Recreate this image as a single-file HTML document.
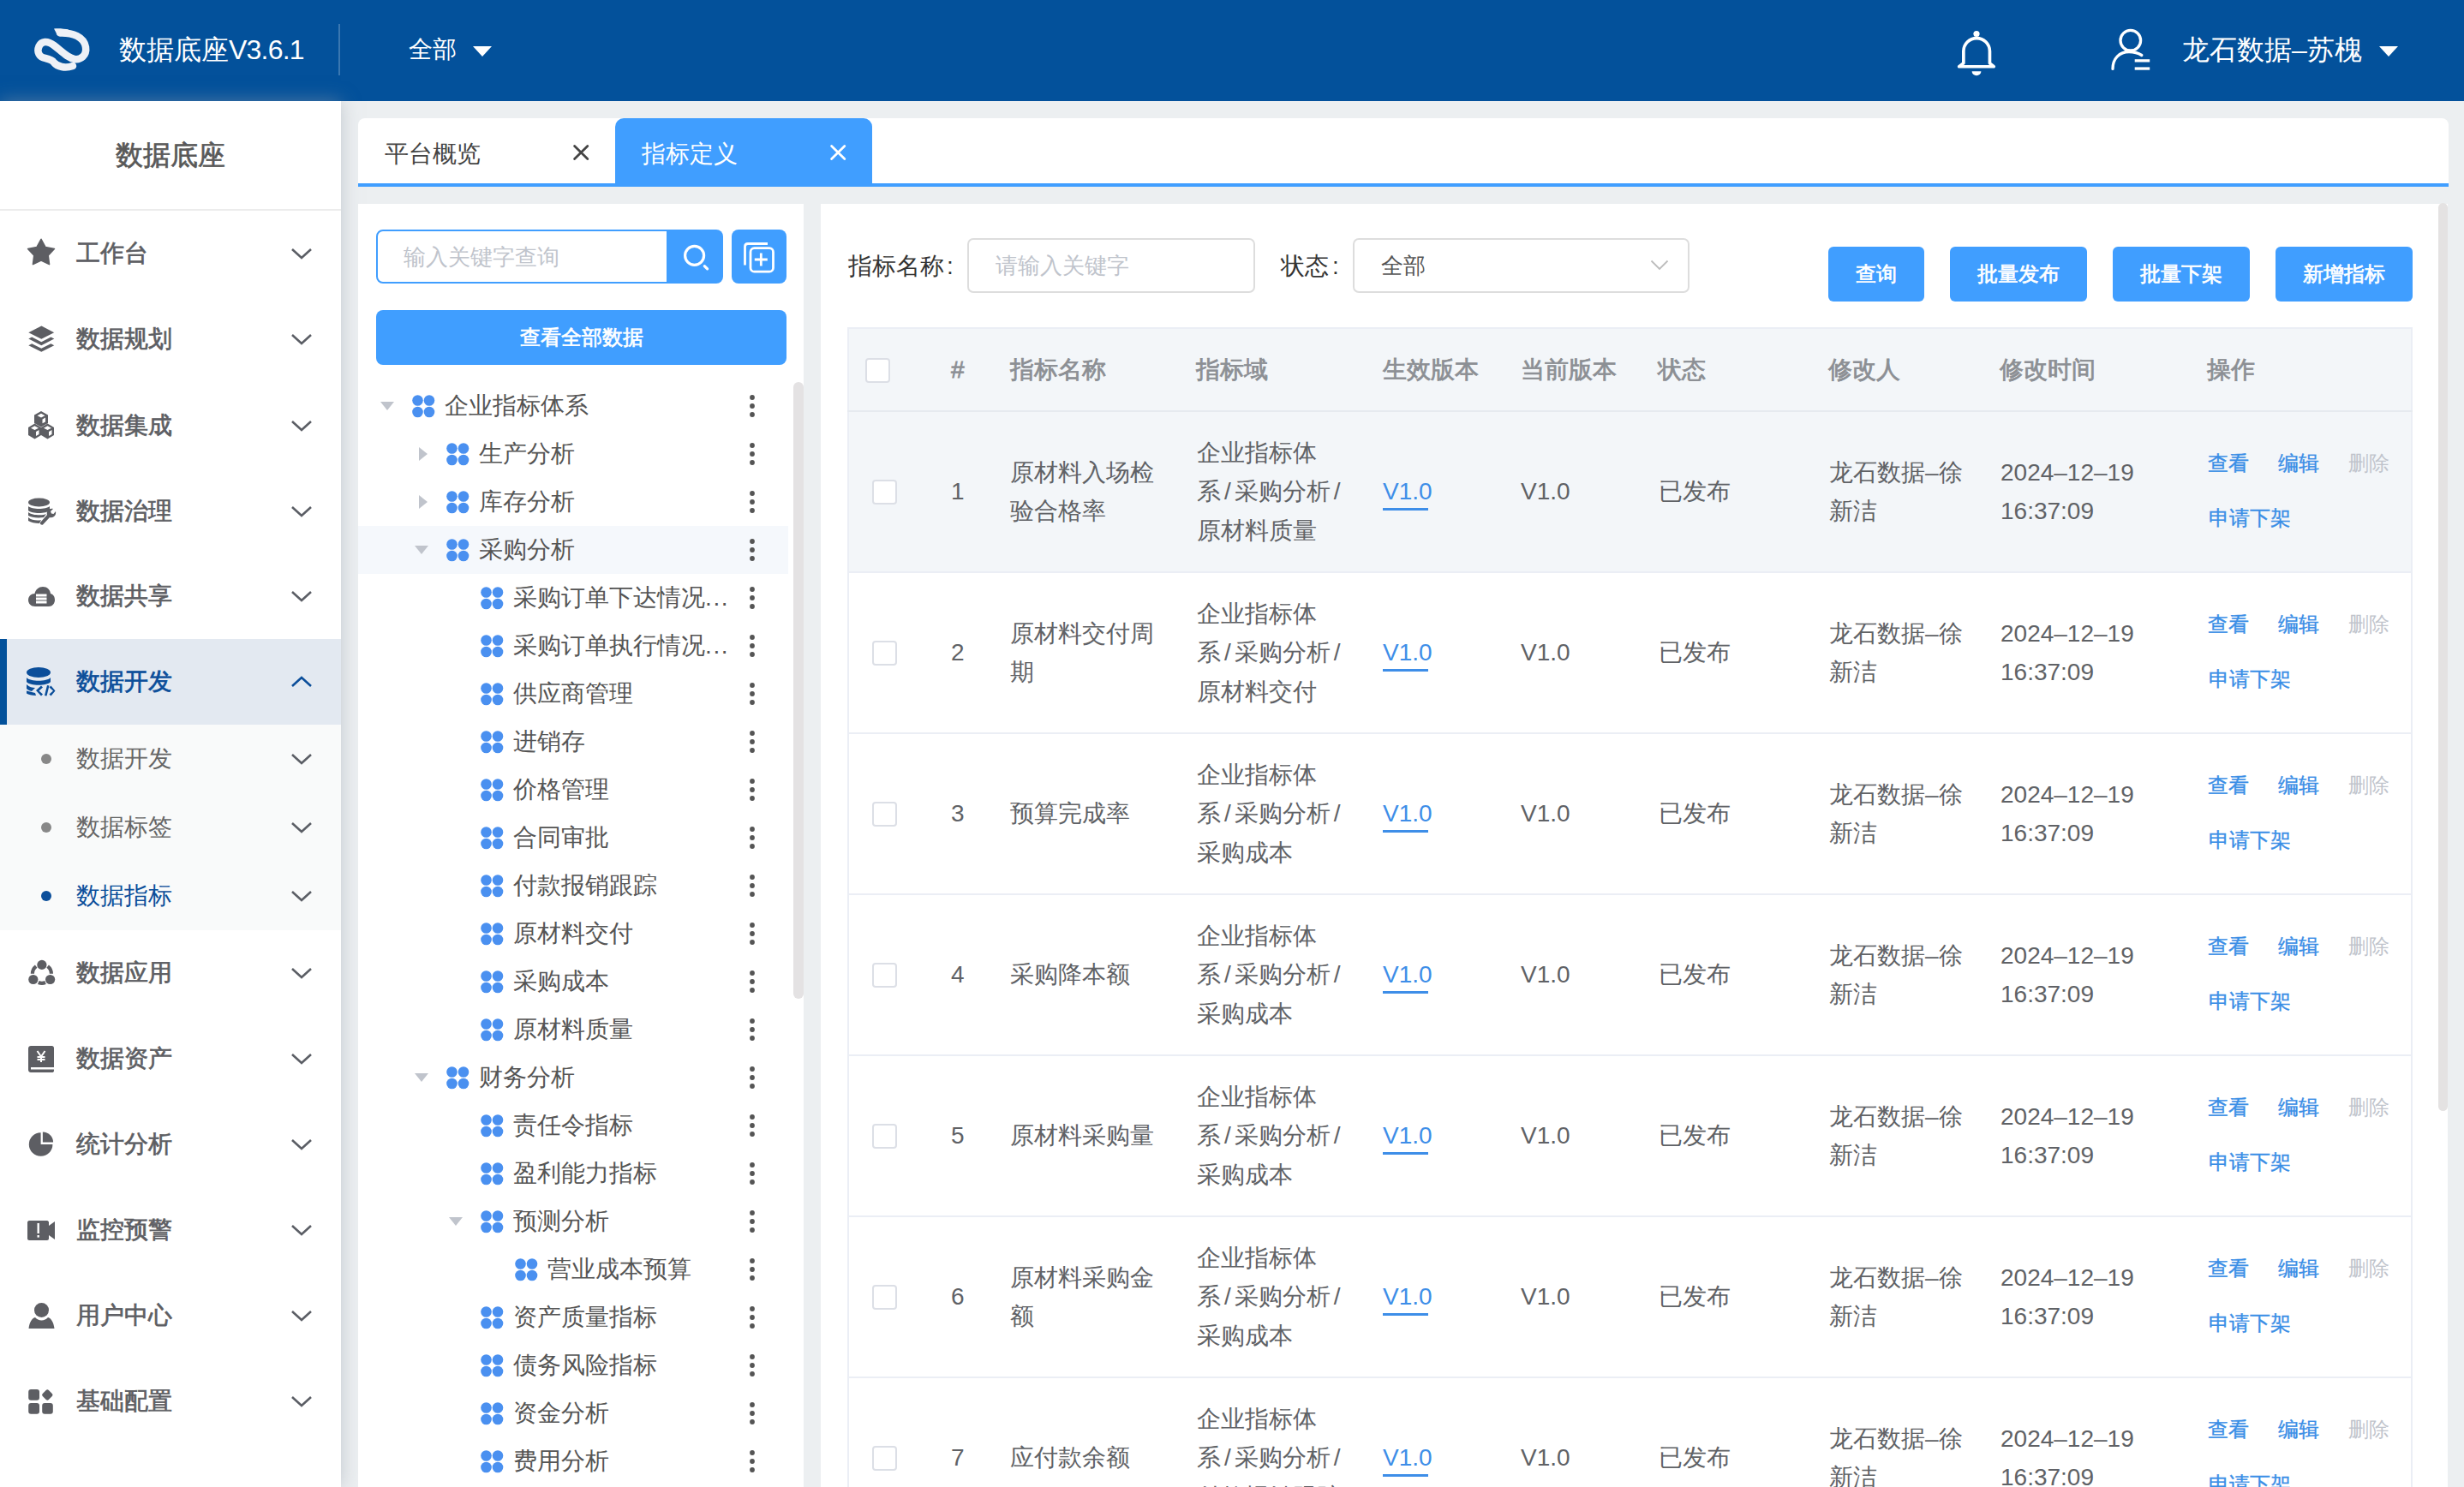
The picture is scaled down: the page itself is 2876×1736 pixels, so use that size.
<!DOCTYPE html>
<html><head><meta charset="utf-8"><title>数据底座</title>
<style>
*{box-sizing:border-box;margin:0;padding:0}
html,body{width:2876px;height:1736px;overflow:hidden;background:#eceff1;font-family:"Liberation Sans", sans-serif;}
.abs{position:absolute}
.t{position:absolute;white-space:nowrap}
svg{position:absolute;overflow:visible}
</style></head>
<body>
<div class="abs" style="left:0;top:0;width:2876px;height:118px;background:#03519b;"></div>
<svg style="left:0;top:0" width="120" height="118"><path d="M70 38.5 C85 38 98 43 100 55 C101.5 65 94 70 87 69 C79 68 71 59 63 53 C55 47 48.5 48 45.5 54 C42.5 61 46 67 53 68 C58 69 61 70 63 73 C67 78 76 80 85 77" fill="none" stroke="#eef1f6" stroke-width="8.5" stroke-linecap="round"/><path d="M63 33.5 C70 33 76 34 80 34.5 L78 43 C74 42 70 41.5 67 41 Z" fill="#eef1f6"/></svg>
<div class="t" style="left:139px;top:28.0px;font-size:32px;line-height:60px;color:#fff;font-weight:400;">数据底座<span style="letter-spacing:-0.8px">V3.6.1</span></div>
<div class="abs" style="left:395px;top:28px;width:2px;height:60px;background:rgba(255,255,255,0.22)"></div>
<div class="t" style="left:477px;top:28.0px;font-size:28px;line-height:60px;color:#fff;font-weight:400;">全部</div>
<svg style="left:552px;top:54px" width="22" height="12"><path d="M0 0 L22 0 L11 12 Z" fill="#fff"/></svg>
<svg style="left:2280px;top:30px" width="56" height="64"><path d="M11.85 43.8 L11.85 29.85 A15.3 15.3 0 0 1 42.45 29.85 L42.45 43.8 L47.15 47.75 L6.65 47.75 Z" fill="none" stroke="#fff" stroke-width="3.7" stroke-linejoin="round"/><circle cx="27" cy="9.5" r="3.6" fill="#fff"/><path d="M21.6 53.3 L32.4 53.3 A5.4 5 0 0 1 21.6 53.3 Z" fill="#fff"/></svg>
<svg style="left:2460px;top:32px" width="54" height="54"><circle cx="26.8" cy="15.2" r="11.8" fill="none" stroke="#fff" stroke-width="3.3"/><path d="M6 48.4 C6 36 14 28.5 25 28.5 C31 28.5 36 30 39.8 32.5" fill="none" stroke="#fff" stroke-width="3.3" stroke-linecap="round"/><rect x="31.7" y="37.2" width="17.5" height="3.3" fill="#fff"/><rect x="31.7" y="46.4" width="17.5" height="3.3" fill="#fff"/></svg>
<div class="t" style="left:2547px;top:28.0px;font-size:32px;line-height:60px;color:#fff;font-weight:400;">龙石数据–苏槐</div>
<svg style="left:2777px;top:54px" width="22" height="12"><path d="M0 0 L22 0 L11 12 Z" fill="#fff"/></svg>
<div class="abs" style="left:0;top:118px;width:398px;height:1618px;background:#fff;box-shadow:0 0 20px rgba(150,160,172,0.5)"></div>
<div class="t" style="left:0px;top:151.0px;font-size:32px;line-height:60px;color:#595959;font-weight:400;width:398px;text-align:center;-webkit-text-stroke:0.7px #595959;">数据底座</div>
<div class="abs" style="left:0;top:244px;width:398px;height:2px;background:#ececec"></div>
<svg style="left:25px;top:270px" width="50" height="50"><g transform="translate(0 0)"><path d="M23.00 9.30 L28.05 18.54 L38.41 20.49 L31.18 28.16 L32.52 38.61 L23.00 34.10 L13.48 38.61 L14.82 28.16 L7.59 20.49 L17.95 18.54 Z" fill="#5d5e63" stroke="#5d5e63" stroke-width="1.6" stroke-linejoin="round"/></g></svg>
<div class="t" style="left:89px;top:268.0px;font-size:28px;line-height:56px;color:#5d5e63;font-weight:400;-webkit-text-stroke:0.7px #5d5e63;">工作台</div>
<svg style="left:340px;top:290px" width="24" height="12"><path d="M1 1 L12 11 L23 1" fill="none" stroke="#5b5e65" stroke-width="2.6" stroke-linejoin="miter"/></svg>
<svg style="left:25px;top:370px" width="50" height="50"><g transform="translate(0 0)"><g fill="#5d5e63"><path d="M23.4 10.6 L38.2 18.2 L23.3 25.8 L8.3 18.2 Z"/><path d="M8.3 25.6 L12.2 23.6 L23.3 29.2 L34.4 23.6 L38.3 25.6 L23.3 33.2 Z"/><path d="M8.3 33.2 L12.2 31.2 L23.3 36.8 L34.4 31.2 L38.3 33.2 L23.3 40.8 Z"/></g></g></svg>
<div class="t" style="left:89px;top:368.0px;font-size:28px;line-height:56px;color:#5d5e63;font-weight:400;-webkit-text-stroke:0.7px #5d5e63;">数据规划</div>
<svg style="left:340px;top:390px" width="24" height="12"><path d="M1 1 L12 11 L23 1" fill="none" stroke="#5b5e65" stroke-width="2.6" stroke-linejoin="miter"/></svg>
<svg style="left:25px;top:470px" width="50" height="50"><g transform="translate(8 10)"><g fill="#5d5e63"><path d="M15 0 L23 4.5 L23 14 L15 18.5 L7 14 L7 4.5 Z"/><path d="M7.5 14.5 L15 19 L15 28 L7.5 32.5 L0 28 L0 19 Z"/><path d="M22.5 14.5 L30 19 L30 28 L22.5 32.5 L15 28 L15 19 Z"/></g><g fill="#fff"><path d="M15 2.8 L19.5 5.2 L15 7.6 L10.5 5.2 Z"/><path d="M16.5 9.5 L20 7.6 L20 12.5 L16.5 14.3 Z"/><path d="M7.5 17.3 L12 19.7 L7.5 22 L3 19.7 Z"/><path d="M9 24 L12.5 22 L12.5 27 L9 29 Z"/><path d="M22.5 17.3 L27 19.7 L22.5 22 L18 19.7 Z"/><path d="M24 24 L27.5 22 L27.5 27 L24 29 Z"/></g></g></svg>
<div class="t" style="left:89px;top:469.0px;font-size:28px;line-height:56px;color:#5d5e63;font-weight:400;-webkit-text-stroke:0.7px #5d5e63;">数据集成</div>
<svg style="left:340px;top:491px" width="24" height="12"><path d="M1 1 L12 11 L23 1" fill="none" stroke="#5b5e65" stroke-width="2.6" stroke-linejoin="miter"/></svg>
<svg style="left:25px;top:570px" width="50" height="50"><g transform="translate(8 11)"><g fill="#5d5e63"><ellipse cx="12.5" cy="5.5" rx="12.5" ry="5"/><path d="M0 10 C4 14 21 14 25 10 L25 15 C21 19 4 19 0 15 Z"/><path d="M0 17 C4 21 18 21 21 19 L18 23 C10 24 4 23 0 21 Z"/><path d="M0 23 C4 27 12 27 15 26 L13 30 C8 30 3 29 0 27 Z"/><path d="M14 29 L22 20 C21 16 24 12 29 13 L26 16 L27 18.5 L29.5 19 L32 16 C33 21 29 24 25 23 L17 31.5 C16 32.5 13 31 14 29 Z"/></g></g></svg>
<div class="t" style="left:89px;top:569.0px;font-size:28px;line-height:56px;color:#5d5e63;font-weight:400;-webkit-text-stroke:0.7px #5d5e63;">数据治理</div>
<svg style="left:340px;top:591px" width="24" height="12"><path d="M1 1 L12 11 L23 1" fill="none" stroke="#5b5e65" stroke-width="2.6" stroke-linejoin="miter"/></svg>
<svg style="left:25px;top:670px" width="50" height="50"><g transform="translate(8 15)"><path d="M8 23 C3 23 0 19.5 0 15.5 C0 11 3.5 8 7.5 8 C8.5 3 12.5 0 17 0 C22 0 25.5 3.5 26 8 C29.5 9 31 12 31 15.5 C31 19.5 28 23 24 23 Z" fill="#5d5e63"/><g fill="#fff"><rect x="9" y="8.5" width="12.5" height="3"/><rect x="9" y="12.5" width="12.5" height="3"/><rect x="9" y="16.5" width="12.5" height="3"/></g></g></svg>
<div class="t" style="left:89px;top:668.0px;font-size:28px;line-height:56px;color:#5d5e63;font-weight:400;-webkit-text-stroke:0.7px #5d5e63;">数据共享</div>
<svg style="left:340px;top:690px" width="24" height="12"><path d="M1 1 L12 11 L23 1" fill="none" stroke="#5b5e65" stroke-width="2.6" stroke-linejoin="miter"/></svg>
<div class="abs" style="left:0;top:746px;width:398px;height:100px;background:#e3e9f1"></div>
<div class="abs" style="left:0;top:746px;width:8px;height:100px;background:#03519b"></div>
<svg style="left:31px;top:779px" width="36" height="36"><g fill="#0b4e9a"><ellipse cx="14" cy="6" rx="14" ry="6"/><path d="M0 12 C4 17 24 17 28 12 L28 17 C24 22 4 22 0 17 Z"/><path d="M0 20 C3 23 7 24 10 24 L6 28 C4 27.5 1.5 26.5 0 25 Z"/><path d="M0 27.5 L10 30 L11 33 C6 33 2 32 0 30.5 Z"/><path d="M11 27 L17 21.5 L19 23.5 L14.5 27.5 L19 31.5 L17 33.5 Z"/><path d="M21 33 L24 21 L26.5 21.5 L23.5 33.5 Z"/><path d="M26.5 23.5 L28.5 21.5 L33.5 27.5 L28.5 33.5 L26.5 31.5 L31 27.5 Z"/></g></svg>
<div class="t" style="left:89px;top:768.0px;font-size:28px;line-height:56px;color:#0b4e9a;font-weight:400;-webkit-text-stroke:0.7px #0b4e9a;">数据开发</div>
<svg style="left:340px;top:790px" width="24" height="12"><path d="M1 11 L12 1 L23 11" fill="none" stroke="#0b4e9a" stroke-width="2.6" stroke-linejoin="miter"/></svg>
<div class="abs" style="left:0;top:846px;width:398px;height:240px;background:#f9fafa"></div>
<div class="abs" style="left:48px;top:880px;width:12px;height:12px;border-radius:6px;background:#888"></div>
<div class="t" style="left:89px;top:858.0px;font-size:28px;line-height:56px;color:#666;font-weight:400;">数据开发</div>
<svg style="left:340px;top:880px" width="24" height="12"><path d="M1 1 L12 11 L23 1" fill="none" stroke="#5b5e65" stroke-width="2.6" stroke-linejoin="miter"/></svg>
<div class="abs" style="left:48px;top:960px;width:12px;height:12px;border-radius:6px;background:#888"></div>
<div class="t" style="left:89px;top:938.0px;font-size:28px;line-height:56px;color:#666;font-weight:400;">数据标签</div>
<svg style="left:340px;top:960px" width="24" height="12"><path d="M1 1 L12 11 L23 1" fill="none" stroke="#5b5e65" stroke-width="2.6" stroke-linejoin="miter"/></svg>
<div class="abs" style="left:48px;top:1040px;width:12px;height:12px;border-radius:6px;background:#0b4e9a"></div>
<div class="t" style="left:89px;top:1018.0px;font-size:28px;line-height:56px;color:#0b4e9a;font-weight:400;">数据指标</div>
<svg style="left:340px;top:1040px" width="24" height="12"><path d="M1 1 L12 11 L23 1" fill="none" stroke="#5b5e65" stroke-width="2.6" stroke-linejoin="miter"/></svg>
<svg style="left:25px;top:1110px" width="50" height="50"><g transform="translate(0 0)"><g fill="#5d5e63"><circle cx="23.9" cy="16.4" r="5.6"/><circle cx="13.8" cy="33.5" r="5.6"/><circle cx="33.6" cy="33.5" r="5.6"/></g><g fill="none" stroke="#5d5e63" stroke-width="4.2"><path d="M12.9 26.8 A11 11 0 0 1 17.13 18.13"/><path d="M30.67 18.13 A11 11 0 0 1 34.9 26.8"/><path d="M28.02 37 A11 11 0 0 1 19.78 37"/></g></g></svg>
<div class="t" style="left:89px;top:1108.0px;font-size:28px;line-height:56px;color:#5d5e63;font-weight:400;-webkit-text-stroke:0.7px #5d5e63;">数据应用</div>
<svg style="left:340px;top:1130px" width="24" height="12"><path d="M1 1 L12 11 L23 1" fill="none" stroke="#5b5e65" stroke-width="2.6" stroke-linejoin="miter"/></svg>
<svg style="left:25px;top:1210px" width="50" height="50"><g transform="translate(8 11)"><path d="M3 0 L27.5 0 C29 0 30 1 30 2.5 L30 25 L3 25 L3 27.5 L30 27.5 L30 29 C30 30.5 29 31 27.5 31 L3 31 C1.5 31 0 30 0 28 L0 3 C0 1 1.5 0 3 0 Z" fill="#5d5e63"/><g stroke="#fff" stroke-width="2" fill="none"><path d="M10.5 6 L15 12.5 L19.5 6 M15 12.5 L15 19 M10.5 13 L19.5 13 M10.5 16 L19.5 16"/></g></g></svg>
<div class="t" style="left:89px;top:1208.0px;font-size:28px;line-height:56px;color:#5d5e63;font-weight:400;-webkit-text-stroke:0.7px #5d5e63;">数据资产</div>
<svg style="left:340px;top:1230px" width="24" height="12"><path d="M1 1 L12 11 L23 1" fill="none" stroke="#5b5e65" stroke-width="2.6" stroke-linejoin="miter"/></svg>
<svg style="left:25px;top:1310px" width="50" height="50"><g transform="translate(0 0)"><path d="M22.6 12.2 L22.6 25.9 L36.4 25.9 A13.8 13.8 0 1 1 22.6 12.2 Z" fill="#5d5e63"/><path d="M24.9 11.6 A12.2 12.2 0 0 1 37.1 23.6 L24.9 23.6 Z" fill="#5d5e63"/></g></svg>
<div class="t" style="left:89px;top:1308.0px;font-size:28px;line-height:56px;color:#5d5e63;font-weight:400;-webkit-text-stroke:0.7px #5d5e63;">统计分析</div>
<svg style="left:340px;top:1330px" width="24" height="12"><path d="M1 1 L12 11 L23 1" fill="none" stroke="#5b5e65" stroke-width="2.6" stroke-linejoin="miter"/></svg>
<svg style="left:25px;top:1410px" width="50" height="50"><g transform="translate(7 15)"><path d="M2 0 L23 0 C24 0 25 1 25 2 L25 6 L32 1 L32 22 L25 17 L25 21 C25 22 24 23 23 23 L2 23 C1 23 0 22 0 21 L0 2 C0 1 1 0 2 0 Z" fill="#5d5e63"/><rect x="11.5" y="3" width="2.4" height="12" fill="#fff"/><rect x="11.5" y="17" width="2.4" height="2.6" fill="#fff"/></g></svg>
<div class="t" style="left:89px;top:1408.0px;font-size:28px;line-height:56px;color:#5d5e63;font-weight:400;-webkit-text-stroke:0.7px #5d5e63;">监控预警</div>
<svg style="left:340px;top:1430px" width="24" height="12"><path d="M1 1 L12 11 L23 1" fill="none" stroke="#5b5e65" stroke-width="2.6" stroke-linejoin="miter"/></svg>
<svg style="left:25px;top:1510px" width="50" height="50"><g transform="translate(8 11)"><circle cx="15.5" cy="8.5" r="8.5" fill="#5d5e63"/><path d="M0.5 30 C1.5 22 4.5 18 8 17 C10 19 12.5 20.5 15.5 20.5 C18.5 20.5 21 19 23 17 C26.5 18 29.5 22 30.5 30 Z" fill="#5d5e63"/></g></svg>
<div class="t" style="left:89px;top:1508.0px;font-size:28px;line-height:56px;color:#5d5e63;font-weight:400;-webkit-text-stroke:0.7px #5d5e63;">用户中心</div>
<svg style="left:340px;top:1530px" width="24" height="12"><path d="M1 1 L12 11 L23 1" fill="none" stroke="#5b5e65" stroke-width="2.6" stroke-linejoin="miter"/></svg>
<svg style="left:25px;top:1610px" width="50" height="50"><g transform="translate(0 0)"><g fill="#5d5e63"><rect x="8.2" y="11.9" width="12.8" height="12.8" rx="3"/><rect x="25.3" y="13.5" width="10" height="10" rx="2.2" transform="rotate(45 30.3 18.5)"/><rect x="8.2" y="27.9" width="12.8" height="12.8" rx="3"/><rect x="24.2" y="27.9" width="12.6" height="12.8" rx="3"/></g></g></svg>
<div class="t" style="left:89px;top:1608.0px;font-size:28px;line-height:56px;color:#5d5e63;font-weight:400;-webkit-text-stroke:0.7px #5d5e63;">基础配置</div>
<svg style="left:340px;top:1630px" width="24" height="12"><path d="M1 1 L12 11 L23 1" fill="none" stroke="#5b5e65" stroke-width="2.6" stroke-linejoin="miter"/></svg>
<div class="abs" style="left:418px;top:138px;width:2440px;height:80px;background:#fff;border-radius:8px 8px 0 0"></div>
<div class="abs" style="left:418px;top:214px;width:2440px;height:4px;background:#409eff"></div>
<div class="t" style="left:449px;top:152.0px;font-size:28px;line-height:56px;color:#444;font-weight:400;">平台概览</div>
<svg style="left:669px;top:169px" width="20" height="20"><path d="M1.6 1.6 L16.8 16.4 M16.8 1.6 L1.6 16.4" stroke="#444" stroke-width="2.8" stroke-linecap="round"/></svg>
<div class="abs" style="left:718px;top:138px;width:300px;height:80px;background:#409eff;border-radius:10px 10px 0 0"></div>
<div class="t" style="left:749px;top:152.0px;font-size:28px;line-height:56px;color:#fff;font-weight:400;">指标定义</div>
<svg style="left:969px;top:169px" width="20" height="20"><path d="M1.6 1.6 L16.8 16.4 M16.8 1.6 L1.6 16.4" stroke="#fff" stroke-width="2.8" stroke-linecap="round"/></svg>
<div class="abs" style="left:418px;top:238px;width:520px;height:1498px;background:#fff"></div>
<div class="abs" style="left:439px;top:268px;width:345px;height:63px;border:2px solid #409eff;border-radius:8px 0 0 8px;background:#fff"></div>
<div class="t" style="left:471px;top:274.0px;font-size:26px;line-height:52px;color:#c0c4cc;font-weight:400;">输入关键字查询</div>
<div class="abs" style="left:778px;top:268px;width:66px;height:63px;background:#409eff;border-radius:0 8px 8px 0"></div>
<svg style="left:790px;top:278px" width="40" height="40"><circle cx="20.6" cy="20.3" r="11" fill="none" stroke="#fff" stroke-width="3.2"/><path d="M32.3 32.6 L35.6 35.9" stroke="#fff" stroke-width="3.2" stroke-linecap="round"/></svg>
<div class="abs" style="left:854px;top:268px;width:64px;height:63px;background:#409eff;border-radius:8px"></div>
<svg style="left:860px;top:276px" width="50" height="50"><path d="M9.5 33.5 L9.5 12 Q9.5 8.5 13 8.5 L36 8.5" fill="none" stroke="#fff" stroke-width="2.8"/><rect x="16" y="13.7" width="26.5" height="27.5" rx="4.5" fill="none" stroke="#fff" stroke-width="2.8"/><path d="M28.3 19.5 L28.3 34.5 M20.8 27 L35.8 27" stroke="#fff" stroke-width="2.8"/></svg>
<div class="abs" style="left:439px;top:362px;width:479px;height:64px;background:#409eff;border-radius:8px"></div>
<div class="t" style="left:439px;top:370.0px;font-size:24px;line-height:48px;color:#fff;font-weight:400;width:479px;text-align:center;-webkit-text-stroke:0.7px #fff;">查看全部数据</div>
<div class="abs" style="left:418px;top:614px;width:502px;height:56px;background:#f5f8fc"></div>
<svg style="left:444px;top:469px" width="16" height="10"><path d="M0 0 L16 0 L8 10 Z" fill="#c0c4cc"/></svg>
<svg style="left:481px;top:461px" width="27" height="27"><g fill="#4a90f0"><circle cx="6.5" cy="6.5" r="6.3"/><circle cx="20" cy="6.5" r="6.3"/><circle cx="6.5" cy="20" r="6.3"/><circle cx="20" cy="20" r="6.3"/></g></svg>
<div class="t" style="left:519px;top:446.0px;font-size:28px;line-height:56px;color:#555;font-weight:400;">企业指标体系</div>
<svg style="left:874px;top:460px" width="8" height="28"><circle cx="4" cy="4" r="2.9" fill="#555"/><circle cx="4" cy="14" r="2.9" fill="#555"/><circle cx="4" cy="24" r="2.9" fill="#555"/></svg>
<svg style="left:489px;top:522px" width="10" height="16"><path d="M0 0 L10 8 L0 16 Z" fill="#c0c4cc"/></svg>
<svg style="left:521px;top:517px" width="27" height="27"><g fill="#4a90f0"><circle cx="6.5" cy="6.5" r="6.3"/><circle cx="20" cy="6.5" r="6.3"/><circle cx="6.5" cy="20" r="6.3"/><circle cx="20" cy="20" r="6.3"/></g></svg>
<div class="t" style="left:559px;top:502.0px;font-size:28px;line-height:56px;color:#555;font-weight:400;">生产分析</div>
<svg style="left:874px;top:516px" width="8" height="28"><circle cx="4" cy="4" r="2.9" fill="#555"/><circle cx="4" cy="14" r="2.9" fill="#555"/><circle cx="4" cy="24" r="2.9" fill="#555"/></svg>
<svg style="left:489px;top:578px" width="10" height="16"><path d="M0 0 L10 8 L0 16 Z" fill="#c0c4cc"/></svg>
<svg style="left:521px;top:573px" width="27" height="27"><g fill="#4a90f0"><circle cx="6.5" cy="6.5" r="6.3"/><circle cx="20" cy="6.5" r="6.3"/><circle cx="6.5" cy="20" r="6.3"/><circle cx="20" cy="20" r="6.3"/></g></svg>
<div class="t" style="left:559px;top:558.0px;font-size:28px;line-height:56px;color:#555;font-weight:400;">库存分析</div>
<svg style="left:874px;top:572px" width="8" height="28"><circle cx="4" cy="4" r="2.9" fill="#555"/><circle cx="4" cy="14" r="2.9" fill="#555"/><circle cx="4" cy="24" r="2.9" fill="#555"/></svg>
<svg style="left:484px;top:637px" width="16" height="10"><path d="M0 0 L16 0 L8 10 Z" fill="#c0c4cc"/></svg>
<svg style="left:521px;top:629px" width="27" height="27"><g fill="#4a90f0"><circle cx="6.5" cy="6.5" r="6.3"/><circle cx="20" cy="6.5" r="6.3"/><circle cx="6.5" cy="20" r="6.3"/><circle cx="20" cy="20" r="6.3"/></g></svg>
<div class="t" style="left:559px;top:614.0px;font-size:28px;line-height:56px;color:#555;font-weight:400;">采购分析</div>
<svg style="left:874px;top:628px" width="8" height="28"><circle cx="4" cy="4" r="2.9" fill="#555"/><circle cx="4" cy="14" r="2.9" fill="#555"/><circle cx="4" cy="24" r="2.9" fill="#555"/></svg>
<svg style="left:561px;top:685px" width="27" height="27"><g fill="#4a90f0"><circle cx="6.5" cy="6.5" r="6.3"/><circle cx="20" cy="6.5" r="6.3"/><circle cx="6.5" cy="20" r="6.3"/><circle cx="20" cy="20" r="6.3"/></g></svg>
<div class="t" style="left:599px;top:670.0px;font-size:28px;line-height:56px;color:#555;font-weight:400;">采购订单下达情况<span style="letter-spacing:1.6px">...</span></div>
<svg style="left:874px;top:684px" width="8" height="28"><circle cx="4" cy="4" r="2.9" fill="#555"/><circle cx="4" cy="14" r="2.9" fill="#555"/><circle cx="4" cy="24" r="2.9" fill="#555"/></svg>
<svg style="left:561px;top:741px" width="27" height="27"><g fill="#4a90f0"><circle cx="6.5" cy="6.5" r="6.3"/><circle cx="20" cy="6.5" r="6.3"/><circle cx="6.5" cy="20" r="6.3"/><circle cx="20" cy="20" r="6.3"/></g></svg>
<div class="t" style="left:599px;top:726.0px;font-size:28px;line-height:56px;color:#555;font-weight:400;">采购订单执行情况<span style="letter-spacing:1.6px">...</span></div>
<svg style="left:874px;top:740px" width="8" height="28"><circle cx="4" cy="4" r="2.9" fill="#555"/><circle cx="4" cy="14" r="2.9" fill="#555"/><circle cx="4" cy="24" r="2.9" fill="#555"/></svg>
<svg style="left:561px;top:797px" width="27" height="27"><g fill="#4a90f0"><circle cx="6.5" cy="6.5" r="6.3"/><circle cx="20" cy="6.5" r="6.3"/><circle cx="6.5" cy="20" r="6.3"/><circle cx="20" cy="20" r="6.3"/></g></svg>
<div class="t" style="left:599px;top:782.0px;font-size:28px;line-height:56px;color:#555;font-weight:400;">供应商管理</div>
<svg style="left:874px;top:796px" width="8" height="28"><circle cx="4" cy="4" r="2.9" fill="#555"/><circle cx="4" cy="14" r="2.9" fill="#555"/><circle cx="4" cy="24" r="2.9" fill="#555"/></svg>
<svg style="left:561px;top:853px" width="27" height="27"><g fill="#4a90f0"><circle cx="6.5" cy="6.5" r="6.3"/><circle cx="20" cy="6.5" r="6.3"/><circle cx="6.5" cy="20" r="6.3"/><circle cx="20" cy="20" r="6.3"/></g></svg>
<div class="t" style="left:599px;top:838.0px;font-size:28px;line-height:56px;color:#555;font-weight:400;">进销存</div>
<svg style="left:874px;top:852px" width="8" height="28"><circle cx="4" cy="4" r="2.9" fill="#555"/><circle cx="4" cy="14" r="2.9" fill="#555"/><circle cx="4" cy="24" r="2.9" fill="#555"/></svg>
<svg style="left:561px;top:909px" width="27" height="27"><g fill="#4a90f0"><circle cx="6.5" cy="6.5" r="6.3"/><circle cx="20" cy="6.5" r="6.3"/><circle cx="6.5" cy="20" r="6.3"/><circle cx="20" cy="20" r="6.3"/></g></svg>
<div class="t" style="left:599px;top:894.0px;font-size:28px;line-height:56px;color:#555;font-weight:400;">价格管理</div>
<svg style="left:874px;top:908px" width="8" height="28"><circle cx="4" cy="4" r="2.9" fill="#555"/><circle cx="4" cy="14" r="2.9" fill="#555"/><circle cx="4" cy="24" r="2.9" fill="#555"/></svg>
<svg style="left:561px;top:965px" width="27" height="27"><g fill="#4a90f0"><circle cx="6.5" cy="6.5" r="6.3"/><circle cx="20" cy="6.5" r="6.3"/><circle cx="6.5" cy="20" r="6.3"/><circle cx="20" cy="20" r="6.3"/></g></svg>
<div class="t" style="left:599px;top:950.0px;font-size:28px;line-height:56px;color:#555;font-weight:400;">合同审批</div>
<svg style="left:874px;top:964px" width="8" height="28"><circle cx="4" cy="4" r="2.9" fill="#555"/><circle cx="4" cy="14" r="2.9" fill="#555"/><circle cx="4" cy="24" r="2.9" fill="#555"/></svg>
<svg style="left:561px;top:1021px" width="27" height="27"><g fill="#4a90f0"><circle cx="6.5" cy="6.5" r="6.3"/><circle cx="20" cy="6.5" r="6.3"/><circle cx="6.5" cy="20" r="6.3"/><circle cx="20" cy="20" r="6.3"/></g></svg>
<div class="t" style="left:599px;top:1006.0px;font-size:28px;line-height:56px;color:#555;font-weight:400;">付款报销跟踪</div>
<svg style="left:874px;top:1020px" width="8" height="28"><circle cx="4" cy="4" r="2.9" fill="#555"/><circle cx="4" cy="14" r="2.9" fill="#555"/><circle cx="4" cy="24" r="2.9" fill="#555"/></svg>
<svg style="left:561px;top:1077px" width="27" height="27"><g fill="#4a90f0"><circle cx="6.5" cy="6.5" r="6.3"/><circle cx="20" cy="6.5" r="6.3"/><circle cx="6.5" cy="20" r="6.3"/><circle cx="20" cy="20" r="6.3"/></g></svg>
<div class="t" style="left:599px;top:1062.0px;font-size:28px;line-height:56px;color:#555;font-weight:400;">原材料交付</div>
<svg style="left:874px;top:1076px" width="8" height="28"><circle cx="4" cy="4" r="2.9" fill="#555"/><circle cx="4" cy="14" r="2.9" fill="#555"/><circle cx="4" cy="24" r="2.9" fill="#555"/></svg>
<svg style="left:561px;top:1133px" width="27" height="27"><g fill="#4a90f0"><circle cx="6.5" cy="6.5" r="6.3"/><circle cx="20" cy="6.5" r="6.3"/><circle cx="6.5" cy="20" r="6.3"/><circle cx="20" cy="20" r="6.3"/></g></svg>
<div class="t" style="left:599px;top:1118.0px;font-size:28px;line-height:56px;color:#555;font-weight:400;">采购成本</div>
<svg style="left:874px;top:1132px" width="8" height="28"><circle cx="4" cy="4" r="2.9" fill="#555"/><circle cx="4" cy="14" r="2.9" fill="#555"/><circle cx="4" cy="24" r="2.9" fill="#555"/></svg>
<svg style="left:561px;top:1189px" width="27" height="27"><g fill="#4a90f0"><circle cx="6.5" cy="6.5" r="6.3"/><circle cx="20" cy="6.5" r="6.3"/><circle cx="6.5" cy="20" r="6.3"/><circle cx="20" cy="20" r="6.3"/></g></svg>
<div class="t" style="left:599px;top:1174.0px;font-size:28px;line-height:56px;color:#555;font-weight:400;">原材料质量</div>
<svg style="left:874px;top:1188px" width="8" height="28"><circle cx="4" cy="4" r="2.9" fill="#555"/><circle cx="4" cy="14" r="2.9" fill="#555"/><circle cx="4" cy="24" r="2.9" fill="#555"/></svg>
<svg style="left:484px;top:1253px" width="16" height="10"><path d="M0 0 L16 0 L8 10 Z" fill="#c0c4cc"/></svg>
<svg style="left:521px;top:1245px" width="27" height="27"><g fill="#4a90f0"><circle cx="6.5" cy="6.5" r="6.3"/><circle cx="20" cy="6.5" r="6.3"/><circle cx="6.5" cy="20" r="6.3"/><circle cx="20" cy="20" r="6.3"/></g></svg>
<div class="t" style="left:559px;top:1230.0px;font-size:28px;line-height:56px;color:#555;font-weight:400;">财务分析</div>
<svg style="left:874px;top:1244px" width="8" height="28"><circle cx="4" cy="4" r="2.9" fill="#555"/><circle cx="4" cy="14" r="2.9" fill="#555"/><circle cx="4" cy="24" r="2.9" fill="#555"/></svg>
<svg style="left:561px;top:1301px" width="27" height="27"><g fill="#4a90f0"><circle cx="6.5" cy="6.5" r="6.3"/><circle cx="20" cy="6.5" r="6.3"/><circle cx="6.5" cy="20" r="6.3"/><circle cx="20" cy="20" r="6.3"/></g></svg>
<div class="t" style="left:599px;top:1286.0px;font-size:28px;line-height:56px;color:#555;font-weight:400;">责任令指标</div>
<svg style="left:874px;top:1300px" width="8" height="28"><circle cx="4" cy="4" r="2.9" fill="#555"/><circle cx="4" cy="14" r="2.9" fill="#555"/><circle cx="4" cy="24" r="2.9" fill="#555"/></svg>
<svg style="left:561px;top:1357px" width="27" height="27"><g fill="#4a90f0"><circle cx="6.5" cy="6.5" r="6.3"/><circle cx="20" cy="6.5" r="6.3"/><circle cx="6.5" cy="20" r="6.3"/><circle cx="20" cy="20" r="6.3"/></g></svg>
<div class="t" style="left:599px;top:1342.0px;font-size:28px;line-height:56px;color:#555;font-weight:400;">盈利能力指标</div>
<svg style="left:874px;top:1356px" width="8" height="28"><circle cx="4" cy="4" r="2.9" fill="#555"/><circle cx="4" cy="14" r="2.9" fill="#555"/><circle cx="4" cy="24" r="2.9" fill="#555"/></svg>
<svg style="left:524px;top:1421px" width="16" height="10"><path d="M0 0 L16 0 L8 10 Z" fill="#c0c4cc"/></svg>
<svg style="left:561px;top:1413px" width="27" height="27"><g fill="#4a90f0"><circle cx="6.5" cy="6.5" r="6.3"/><circle cx="20" cy="6.5" r="6.3"/><circle cx="6.5" cy="20" r="6.3"/><circle cx="20" cy="20" r="6.3"/></g></svg>
<div class="t" style="left:599px;top:1398.0px;font-size:28px;line-height:56px;color:#555;font-weight:400;">预测分析</div>
<svg style="left:874px;top:1412px" width="8" height="28"><circle cx="4" cy="4" r="2.9" fill="#555"/><circle cx="4" cy="14" r="2.9" fill="#555"/><circle cx="4" cy="24" r="2.9" fill="#555"/></svg>
<svg style="left:601px;top:1469px" width="27" height="27"><g fill="#4a90f0"><circle cx="6.5" cy="6.5" r="6.3"/><circle cx="20" cy="6.5" r="6.3"/><circle cx="6.5" cy="20" r="6.3"/><circle cx="20" cy="20" r="6.3"/></g></svg>
<div class="t" style="left:639px;top:1454.0px;font-size:28px;line-height:56px;color:#555;font-weight:400;">营业成本预算</div>
<svg style="left:874px;top:1468px" width="8" height="28"><circle cx="4" cy="4" r="2.9" fill="#555"/><circle cx="4" cy="14" r="2.9" fill="#555"/><circle cx="4" cy="24" r="2.9" fill="#555"/></svg>
<svg style="left:561px;top:1525px" width="27" height="27"><g fill="#4a90f0"><circle cx="6.5" cy="6.5" r="6.3"/><circle cx="20" cy="6.5" r="6.3"/><circle cx="6.5" cy="20" r="6.3"/><circle cx="20" cy="20" r="6.3"/></g></svg>
<div class="t" style="left:599px;top:1510.0px;font-size:28px;line-height:56px;color:#555;font-weight:400;">资产质量指标</div>
<svg style="left:874px;top:1524px" width="8" height="28"><circle cx="4" cy="4" r="2.9" fill="#555"/><circle cx="4" cy="14" r="2.9" fill="#555"/><circle cx="4" cy="24" r="2.9" fill="#555"/></svg>
<svg style="left:561px;top:1581px" width="27" height="27"><g fill="#4a90f0"><circle cx="6.5" cy="6.5" r="6.3"/><circle cx="20" cy="6.5" r="6.3"/><circle cx="6.5" cy="20" r="6.3"/><circle cx="20" cy="20" r="6.3"/></g></svg>
<div class="t" style="left:599px;top:1566.0px;font-size:28px;line-height:56px;color:#555;font-weight:400;">债务风险指标</div>
<svg style="left:874px;top:1580px" width="8" height="28"><circle cx="4" cy="4" r="2.9" fill="#555"/><circle cx="4" cy="14" r="2.9" fill="#555"/><circle cx="4" cy="24" r="2.9" fill="#555"/></svg>
<svg style="left:561px;top:1637px" width="27" height="27"><g fill="#4a90f0"><circle cx="6.5" cy="6.5" r="6.3"/><circle cx="20" cy="6.5" r="6.3"/><circle cx="6.5" cy="20" r="6.3"/><circle cx="20" cy="20" r="6.3"/></g></svg>
<div class="t" style="left:599px;top:1622.0px;font-size:28px;line-height:56px;color:#555;font-weight:400;">资金分析</div>
<svg style="left:874px;top:1636px" width="8" height="28"><circle cx="4" cy="4" r="2.9" fill="#555"/><circle cx="4" cy="14" r="2.9" fill="#555"/><circle cx="4" cy="24" r="2.9" fill="#555"/></svg>
<svg style="left:561px;top:1693px" width="27" height="27"><g fill="#4a90f0"><circle cx="6.5" cy="6.5" r="6.3"/><circle cx="20" cy="6.5" r="6.3"/><circle cx="6.5" cy="20" r="6.3"/><circle cx="20" cy="20" r="6.3"/></g></svg>
<div class="t" style="left:599px;top:1678.0px;font-size:28px;line-height:56px;color:#555;font-weight:400;">费用分析</div>
<svg style="left:874px;top:1692px" width="8" height="28"><circle cx="4" cy="4" r="2.9" fill="#555"/><circle cx="4" cy="14" r="2.9" fill="#555"/><circle cx="4" cy="24" r="2.9" fill="#555"/></svg>
<div class="abs" style="left:926px;top:446px;width:12px;height:720px;background:#e4e2e3;border-radius:6px"></div>
<div class="abs" style="left:958px;top:238px;width:1899px;height:1498px;background:#fff"></div>
<div class="abs" style="left:2846px;top:237px;width:11px;height:1060px;background:#e4e2e2;border-radius:6px"></div>
<div class="t" style="left:990px;top:283.0px;font-size:28px;line-height:56px;color:#333;font-weight:400;">指标名称<span style="margin-left:3px">:</span></div>
<div class="abs" style="left:1129px;top:278px;width:336px;height:64px;border:2px solid #dddddd;border-radius:7px"></div>
<div class="t" style="left:1162px;top:284.0px;font-size:26px;line-height:52px;color:#c0c4cc;font-weight:400;">请输入关键字</div>
<div class="t" style="left:1495px;top:283.0px;font-size:28px;line-height:56px;color:#333;font-weight:400;">状态<span style="margin-left:4px">:</span></div>
<div class="abs" style="left:1579px;top:278px;width:393px;height:64px;border:2px solid #dddddd;border-radius:7px"></div>
<div class="t" style="left:1612px;top:284.0px;font-size:26px;line-height:52px;color:#555;font-weight:400;">全部</div>
<svg style="left:1926px;top:303px" width="22" height="13"><path d="M1.5 1.5 L11 11 L20.5 1.5" fill="none" stroke="#bdbdbd" stroke-width="1.8"/></svg>
<div class="abs" style="left:2134px;top:288px;width:112px;height:64px;background:#409eff;border-radius:6px"></div>
<div class="t" style="left:2134px;top:296.0px;font-size:24px;line-height:48px;color:#fff;font-weight:400;width:112px;text-align:center;-webkit-text-stroke:0.7px #fff;">查询</div>
<div class="abs" style="left:2276px;top:288px;width:160px;height:64px;background:#409eff;border-radius:6px"></div>
<div class="t" style="left:2276px;top:296.0px;font-size:24px;line-height:48px;color:#fff;font-weight:400;width:160px;text-align:center;-webkit-text-stroke:0.7px #fff;">批量发布</div>
<div class="abs" style="left:2466px;top:288px;width:160px;height:64px;background:#409eff;border-radius:6px"></div>
<div class="t" style="left:2466px;top:296.0px;font-size:24px;line-height:48px;color:#fff;font-weight:400;width:160px;text-align:center;-webkit-text-stroke:0.7px #fff;">批量下架</div>
<div class="abs" style="left:2656px;top:288px;width:160px;height:64px;background:#409eff;border-radius:6px"></div>
<div class="t" style="left:2656px;top:296.0px;font-size:24px;line-height:48px;color:#fff;font-weight:400;width:160px;text-align:center;-webkit-text-stroke:0.7px #fff;">新增指标</div>
<div class="abs" style="left:989px;top:382px;width:1827px;height:1354px;border:2px solid #ebeef5;border-bottom:none"></div>
<div class="abs" style="left:991px;top:384px;width:1823px;height:95px;background:#f3f6f9"></div>
<div class="abs" style="left:989px;top:479px;width:1827px;height:2px;background:#e6eaef"></div>
<div class="abs" style="left:1010px;top:417.5px;width:29px;height:29px;border:2px solid #dcdfe6;border-radius:4px;background:#fff"></div>
<div class="t" style="left:1110px;top:404.0px;font-size:28px;line-height:56px;color:#8c8f94;font-weight:400;-webkit-text-stroke:0.8px #8c8f94;">#</div>
<div class="t" style="left:1179px;top:404.0px;font-size:28px;line-height:56px;color:#8c8f94;font-weight:400;-webkit-text-stroke:0.8px #8c8f94;">指标名称</div>
<div class="t" style="left:1396px;top:404.0px;font-size:28px;line-height:56px;color:#8c8f94;font-weight:400;-webkit-text-stroke:0.8px #8c8f94;">指标域</div>
<div class="t" style="left:1614px;top:404.0px;font-size:28px;line-height:56px;color:#8c8f94;font-weight:400;-webkit-text-stroke:0.8px #8c8f94;">生效版本</div>
<div class="t" style="left:1775px;top:404.0px;font-size:28px;line-height:56px;color:#8c8f94;font-weight:400;-webkit-text-stroke:0.8px #8c8f94;">当前版本</div>
<div class="t" style="left:1935px;top:404.0px;font-size:28px;line-height:56px;color:#8c8f94;font-weight:400;-webkit-text-stroke:0.8px #8c8f94;">状态</div>
<div class="t" style="left:2134px;top:404.0px;font-size:28px;line-height:56px;color:#8c8f94;font-weight:400;-webkit-text-stroke:0.8px #8c8f94;">修改人</div>
<div class="t" style="left:2334px;top:404.0px;font-size:28px;line-height:56px;color:#8c8f94;font-weight:400;-webkit-text-stroke:0.8px #8c8f94;">修改时间</div>
<div class="t" style="left:2576px;top:404.0px;font-size:28px;line-height:56px;color:#8c8f94;font-weight:400;-webkit-text-stroke:0.8px #8c8f94;">操作</div>
<div class="abs" style="left:991px;top:481px;width:1823px;height:187px;background:#f3f6f9"></div>
<div class="abs" style="left:989px;top:667px;width:1827px;height:2px;background:#ebeef5"></div>
<div class="abs" style="left:1018px;top:559.5px;width:29px;height:29px;border:2px solid #dcdfe6;border-radius:4px;background:#fff"></div>
<div class="t" style="left:1110px;top:546.0px;font-size:28px;line-height:56px;color:#606266;font-weight:400;">1</div>
<div class="t" style="left:1179px;top:528.5px;font-size:28px;line-height:45.5px;color:#606266;font-weight:400;">原材料入场检</div>
<div class="t" style="left:1179px;top:574.0px;font-size:28px;line-height:45.5px;color:#606266;font-weight:400;">验合格率</div>
<div class="t" style="left:1397px;top:505.75px;font-size:28px;line-height:45.5px;color:#606266;font-weight:400;">企业指标体</div>
<div class="t" style="left:1397px;top:551.25px;font-size:28px;line-height:45.5px;color:#606266;font-weight:400;">系<span style="margin:0 4px">/</span>采购分析<span style="margin-left:4px">/</span></div>
<div class="t" style="left:1397px;top:596.75px;font-size:28px;line-height:45.5px;color:#606266;font-weight:400;">原材料质量</div>
<div class="t" style="left:1614px;top:546.0px;font-size:28px;line-height:56px;color:#3e8ee8;font-weight:400;">V1.0</div>
<div class="abs" style="left:1614px;top:593px;width:53px;height:3px;background:#3e8ee8"></div>
<div class="t" style="left:1775px;top:546.0px;font-size:28px;line-height:56px;color:#606266;font-weight:400;">V1.0</div>
<div class="t" style="left:1936px;top:546.0px;font-size:28px;line-height:56px;color:#606266;font-weight:400;">已发布</div>
<div class="t" style="left:2135px;top:528.5px;font-size:28px;line-height:45.5px;color:#606266;font-weight:400;">龙石数据–徐</div>
<div class="t" style="left:2135px;top:574.0px;font-size:28px;line-height:45.5px;color:#606266;font-weight:400;">新洁</div>
<div class="t" style="left:2335px;top:528.5px;font-size:28px;line-height:45.5px;color:#606266;font-weight:400;">2024–12–19</div>
<div class="t" style="left:2335px;top:574.0px;font-size:28px;line-height:45.5px;color:#606266;font-weight:400;">16:37:09</div>
<div class="t" style="left:2577px;top:517.0px;font-size:24px;line-height:48px;color:#3a8ee6;font-weight:400;-webkit-text-stroke:0.35px #3a8ee6;">查看</div>
<div class="t" style="left:2659px;top:517.0px;font-size:24px;line-height:48px;color:#3a8ee6;font-weight:400;-webkit-text-stroke:0.35px #3a8ee6;">编辑</div>
<div class="t" style="left:2741px;top:517.0px;font-size:24px;line-height:48px;color:#c0c4cc;font-weight:400;">删除</div>
<div class="t" style="left:2578px;top:581.0px;font-size:24px;line-height:48px;color:#3a8ee6;font-weight:400;-webkit-text-stroke:0.35px #3a8ee6;">申请下架</div>
<div class="abs" style="left:989px;top:855px;width:1827px;height:2px;background:#ebeef5"></div>
<div class="abs" style="left:1018px;top:747.5px;width:29px;height:29px;border:2px solid #dcdfe6;border-radius:4px;background:#fff"></div>
<div class="t" style="left:1110px;top:734.0px;font-size:28px;line-height:56px;color:#606266;font-weight:400;">2</div>
<div class="t" style="left:1179px;top:716.5px;font-size:28px;line-height:45.5px;color:#606266;font-weight:400;">原材料交付周</div>
<div class="t" style="left:1179px;top:762.0px;font-size:28px;line-height:45.5px;color:#606266;font-weight:400;">期</div>
<div class="t" style="left:1397px;top:693.75px;font-size:28px;line-height:45.5px;color:#606266;font-weight:400;">企业指标体</div>
<div class="t" style="left:1397px;top:739.25px;font-size:28px;line-height:45.5px;color:#606266;font-weight:400;">系<span style="margin:0 4px">/</span>采购分析<span style="margin-left:4px">/</span></div>
<div class="t" style="left:1397px;top:784.75px;font-size:28px;line-height:45.5px;color:#606266;font-weight:400;">原材料交付</div>
<div class="t" style="left:1614px;top:734.0px;font-size:28px;line-height:56px;color:#3e8ee8;font-weight:400;">V1.0</div>
<div class="abs" style="left:1614px;top:781px;width:53px;height:3px;background:#3e8ee8"></div>
<div class="t" style="left:1775px;top:734.0px;font-size:28px;line-height:56px;color:#606266;font-weight:400;">V1.0</div>
<div class="t" style="left:1936px;top:734.0px;font-size:28px;line-height:56px;color:#606266;font-weight:400;">已发布</div>
<div class="t" style="left:2135px;top:716.5px;font-size:28px;line-height:45.5px;color:#606266;font-weight:400;">龙石数据–徐</div>
<div class="t" style="left:2135px;top:762.0px;font-size:28px;line-height:45.5px;color:#606266;font-weight:400;">新洁</div>
<div class="t" style="left:2335px;top:716.5px;font-size:28px;line-height:45.5px;color:#606266;font-weight:400;">2024–12–19</div>
<div class="t" style="left:2335px;top:762.0px;font-size:28px;line-height:45.5px;color:#606266;font-weight:400;">16:37:09</div>
<div class="t" style="left:2577px;top:705.0px;font-size:24px;line-height:48px;color:#3a8ee6;font-weight:400;-webkit-text-stroke:0.35px #3a8ee6;">查看</div>
<div class="t" style="left:2659px;top:705.0px;font-size:24px;line-height:48px;color:#3a8ee6;font-weight:400;-webkit-text-stroke:0.35px #3a8ee6;">编辑</div>
<div class="t" style="left:2741px;top:705.0px;font-size:24px;line-height:48px;color:#c0c4cc;font-weight:400;">删除</div>
<div class="t" style="left:2578px;top:769.0px;font-size:24px;line-height:48px;color:#3a8ee6;font-weight:400;-webkit-text-stroke:0.35px #3a8ee6;">申请下架</div>
<div class="abs" style="left:989px;top:1043px;width:1827px;height:2px;background:#ebeef5"></div>
<div class="abs" style="left:1018px;top:935.5px;width:29px;height:29px;border:2px solid #dcdfe6;border-radius:4px;background:#fff"></div>
<div class="t" style="left:1110px;top:922.0px;font-size:28px;line-height:56px;color:#606266;font-weight:400;">3</div>
<div class="t" style="left:1179px;top:927.25px;font-size:28px;line-height:45.5px;color:#606266;font-weight:400;">预算完成率</div>
<div class="t" style="left:1397px;top:881.75px;font-size:28px;line-height:45.5px;color:#606266;font-weight:400;">企业指标体</div>
<div class="t" style="left:1397px;top:927.25px;font-size:28px;line-height:45.5px;color:#606266;font-weight:400;">系<span style="margin:0 4px">/</span>采购分析<span style="margin-left:4px">/</span></div>
<div class="t" style="left:1397px;top:972.75px;font-size:28px;line-height:45.5px;color:#606266;font-weight:400;">采购成本</div>
<div class="t" style="left:1614px;top:922.0px;font-size:28px;line-height:56px;color:#3e8ee8;font-weight:400;">V1.0</div>
<div class="abs" style="left:1614px;top:969px;width:53px;height:3px;background:#3e8ee8"></div>
<div class="t" style="left:1775px;top:922.0px;font-size:28px;line-height:56px;color:#606266;font-weight:400;">V1.0</div>
<div class="t" style="left:1936px;top:922.0px;font-size:28px;line-height:56px;color:#606266;font-weight:400;">已发布</div>
<div class="t" style="left:2135px;top:904.5px;font-size:28px;line-height:45.5px;color:#606266;font-weight:400;">龙石数据–徐</div>
<div class="t" style="left:2135px;top:950.0px;font-size:28px;line-height:45.5px;color:#606266;font-weight:400;">新洁</div>
<div class="t" style="left:2335px;top:904.5px;font-size:28px;line-height:45.5px;color:#606266;font-weight:400;">2024–12–19</div>
<div class="t" style="left:2335px;top:950.0px;font-size:28px;line-height:45.5px;color:#606266;font-weight:400;">16:37:09</div>
<div class="t" style="left:2577px;top:893.0px;font-size:24px;line-height:48px;color:#3a8ee6;font-weight:400;-webkit-text-stroke:0.35px #3a8ee6;">查看</div>
<div class="t" style="left:2659px;top:893.0px;font-size:24px;line-height:48px;color:#3a8ee6;font-weight:400;-webkit-text-stroke:0.35px #3a8ee6;">编辑</div>
<div class="t" style="left:2741px;top:893.0px;font-size:24px;line-height:48px;color:#c0c4cc;font-weight:400;">删除</div>
<div class="t" style="left:2578px;top:957.0px;font-size:24px;line-height:48px;color:#3a8ee6;font-weight:400;-webkit-text-stroke:0.35px #3a8ee6;">申请下架</div>
<div class="abs" style="left:989px;top:1231px;width:1827px;height:2px;background:#ebeef5"></div>
<div class="abs" style="left:1018px;top:1123.5px;width:29px;height:29px;border:2px solid #dcdfe6;border-radius:4px;background:#fff"></div>
<div class="t" style="left:1110px;top:1110.0px;font-size:28px;line-height:56px;color:#606266;font-weight:400;">4</div>
<div class="t" style="left:1179px;top:1115.25px;font-size:28px;line-height:45.5px;color:#606266;font-weight:400;">采购降本额</div>
<div class="t" style="left:1397px;top:1069.75px;font-size:28px;line-height:45.5px;color:#606266;font-weight:400;">企业指标体</div>
<div class="t" style="left:1397px;top:1115.25px;font-size:28px;line-height:45.5px;color:#606266;font-weight:400;">系<span style="margin:0 4px">/</span>采购分析<span style="margin-left:4px">/</span></div>
<div class="t" style="left:1397px;top:1160.75px;font-size:28px;line-height:45.5px;color:#606266;font-weight:400;">采购成本</div>
<div class="t" style="left:1614px;top:1110.0px;font-size:28px;line-height:56px;color:#3e8ee8;font-weight:400;">V1.0</div>
<div class="abs" style="left:1614px;top:1157px;width:53px;height:3px;background:#3e8ee8"></div>
<div class="t" style="left:1775px;top:1110.0px;font-size:28px;line-height:56px;color:#606266;font-weight:400;">V1.0</div>
<div class="t" style="left:1936px;top:1110.0px;font-size:28px;line-height:56px;color:#606266;font-weight:400;">已发布</div>
<div class="t" style="left:2135px;top:1092.5px;font-size:28px;line-height:45.5px;color:#606266;font-weight:400;">龙石数据–徐</div>
<div class="t" style="left:2135px;top:1138.0px;font-size:28px;line-height:45.5px;color:#606266;font-weight:400;">新洁</div>
<div class="t" style="left:2335px;top:1092.5px;font-size:28px;line-height:45.5px;color:#606266;font-weight:400;">2024–12–19</div>
<div class="t" style="left:2335px;top:1138.0px;font-size:28px;line-height:45.5px;color:#606266;font-weight:400;">16:37:09</div>
<div class="t" style="left:2577px;top:1081.0px;font-size:24px;line-height:48px;color:#3a8ee6;font-weight:400;-webkit-text-stroke:0.35px #3a8ee6;">查看</div>
<div class="t" style="left:2659px;top:1081.0px;font-size:24px;line-height:48px;color:#3a8ee6;font-weight:400;-webkit-text-stroke:0.35px #3a8ee6;">编辑</div>
<div class="t" style="left:2741px;top:1081.0px;font-size:24px;line-height:48px;color:#c0c4cc;font-weight:400;">删除</div>
<div class="t" style="left:2578px;top:1145.0px;font-size:24px;line-height:48px;color:#3a8ee6;font-weight:400;-webkit-text-stroke:0.35px #3a8ee6;">申请下架</div>
<div class="abs" style="left:989px;top:1419px;width:1827px;height:2px;background:#ebeef5"></div>
<div class="abs" style="left:1018px;top:1311.5px;width:29px;height:29px;border:2px solid #dcdfe6;border-radius:4px;background:#fff"></div>
<div class="t" style="left:1110px;top:1298.0px;font-size:28px;line-height:56px;color:#606266;font-weight:400;">5</div>
<div class="t" style="left:1179px;top:1303.25px;font-size:28px;line-height:45.5px;color:#606266;font-weight:400;">原材料采购量</div>
<div class="t" style="left:1397px;top:1257.75px;font-size:28px;line-height:45.5px;color:#606266;font-weight:400;">企业指标体</div>
<div class="t" style="left:1397px;top:1303.25px;font-size:28px;line-height:45.5px;color:#606266;font-weight:400;">系<span style="margin:0 4px">/</span>采购分析<span style="margin-left:4px">/</span></div>
<div class="t" style="left:1397px;top:1348.75px;font-size:28px;line-height:45.5px;color:#606266;font-weight:400;">采购成本</div>
<div class="t" style="left:1614px;top:1298.0px;font-size:28px;line-height:56px;color:#3e8ee8;font-weight:400;">V1.0</div>
<div class="abs" style="left:1614px;top:1345px;width:53px;height:3px;background:#3e8ee8"></div>
<div class="t" style="left:1775px;top:1298.0px;font-size:28px;line-height:56px;color:#606266;font-weight:400;">V1.0</div>
<div class="t" style="left:1936px;top:1298.0px;font-size:28px;line-height:56px;color:#606266;font-weight:400;">已发布</div>
<div class="t" style="left:2135px;top:1280.5px;font-size:28px;line-height:45.5px;color:#606266;font-weight:400;">龙石数据–徐</div>
<div class="t" style="left:2135px;top:1326.0px;font-size:28px;line-height:45.5px;color:#606266;font-weight:400;">新洁</div>
<div class="t" style="left:2335px;top:1280.5px;font-size:28px;line-height:45.5px;color:#606266;font-weight:400;">2024–12–19</div>
<div class="t" style="left:2335px;top:1326.0px;font-size:28px;line-height:45.5px;color:#606266;font-weight:400;">16:37:09</div>
<div class="t" style="left:2577px;top:1269.0px;font-size:24px;line-height:48px;color:#3a8ee6;font-weight:400;-webkit-text-stroke:0.35px #3a8ee6;">查看</div>
<div class="t" style="left:2659px;top:1269.0px;font-size:24px;line-height:48px;color:#3a8ee6;font-weight:400;-webkit-text-stroke:0.35px #3a8ee6;">编辑</div>
<div class="t" style="left:2741px;top:1269.0px;font-size:24px;line-height:48px;color:#c0c4cc;font-weight:400;">删除</div>
<div class="t" style="left:2578px;top:1333.0px;font-size:24px;line-height:48px;color:#3a8ee6;font-weight:400;-webkit-text-stroke:0.35px #3a8ee6;">申请下架</div>
<div class="abs" style="left:989px;top:1607px;width:1827px;height:2px;background:#ebeef5"></div>
<div class="abs" style="left:1018px;top:1499.5px;width:29px;height:29px;border:2px solid #dcdfe6;border-radius:4px;background:#fff"></div>
<div class="t" style="left:1110px;top:1486.0px;font-size:28px;line-height:56px;color:#606266;font-weight:400;">6</div>
<div class="t" style="left:1179px;top:1468.5px;font-size:28px;line-height:45.5px;color:#606266;font-weight:400;">原材料采购金</div>
<div class="t" style="left:1179px;top:1514.0px;font-size:28px;line-height:45.5px;color:#606266;font-weight:400;">额</div>
<div class="t" style="left:1397px;top:1445.75px;font-size:28px;line-height:45.5px;color:#606266;font-weight:400;">企业指标体</div>
<div class="t" style="left:1397px;top:1491.25px;font-size:28px;line-height:45.5px;color:#606266;font-weight:400;">系<span style="margin:0 4px">/</span>采购分析<span style="margin-left:4px">/</span></div>
<div class="t" style="left:1397px;top:1536.75px;font-size:28px;line-height:45.5px;color:#606266;font-weight:400;">采购成本</div>
<div class="t" style="left:1614px;top:1486.0px;font-size:28px;line-height:56px;color:#3e8ee8;font-weight:400;">V1.0</div>
<div class="abs" style="left:1614px;top:1533px;width:53px;height:3px;background:#3e8ee8"></div>
<div class="t" style="left:1775px;top:1486.0px;font-size:28px;line-height:56px;color:#606266;font-weight:400;">V1.0</div>
<div class="t" style="left:1936px;top:1486.0px;font-size:28px;line-height:56px;color:#606266;font-weight:400;">已发布</div>
<div class="t" style="left:2135px;top:1468.5px;font-size:28px;line-height:45.5px;color:#606266;font-weight:400;">龙石数据–徐</div>
<div class="t" style="left:2135px;top:1514.0px;font-size:28px;line-height:45.5px;color:#606266;font-weight:400;">新洁</div>
<div class="t" style="left:2335px;top:1468.5px;font-size:28px;line-height:45.5px;color:#606266;font-weight:400;">2024–12–19</div>
<div class="t" style="left:2335px;top:1514.0px;font-size:28px;line-height:45.5px;color:#606266;font-weight:400;">16:37:09</div>
<div class="t" style="left:2577px;top:1457.0px;font-size:24px;line-height:48px;color:#3a8ee6;font-weight:400;-webkit-text-stroke:0.35px #3a8ee6;">查看</div>
<div class="t" style="left:2659px;top:1457.0px;font-size:24px;line-height:48px;color:#3a8ee6;font-weight:400;-webkit-text-stroke:0.35px #3a8ee6;">编辑</div>
<div class="t" style="left:2741px;top:1457.0px;font-size:24px;line-height:48px;color:#c0c4cc;font-weight:400;">删除</div>
<div class="t" style="left:2578px;top:1521.0px;font-size:24px;line-height:48px;color:#3a8ee6;font-weight:400;-webkit-text-stroke:0.35px #3a8ee6;">申请下架</div>
<div class="abs" style="left:989px;top:1795px;width:1827px;height:2px;background:#ebeef5"></div>
<div class="abs" style="left:1018px;top:1687.5px;width:29px;height:29px;border:2px solid #dcdfe6;border-radius:4px;background:#fff"></div>
<div class="t" style="left:1110px;top:1674.0px;font-size:28px;line-height:56px;color:#606266;font-weight:400;">7</div>
<div class="t" style="left:1179px;top:1679.25px;font-size:28px;line-height:45.5px;color:#606266;font-weight:400;">应付款余额</div>
<div class="t" style="left:1397px;top:1633.75px;font-size:28px;line-height:45.5px;color:#606266;font-weight:400;">企业指标体</div>
<div class="t" style="left:1397px;top:1679.25px;font-size:28px;line-height:45.5px;color:#606266;font-weight:400;">系<span style="margin:0 4px">/</span>采购分析<span style="margin-left:4px">/</span></div>
<div class="t" style="left:1397px;top:1724.75px;font-size:28px;line-height:45.5px;color:#606266;font-weight:400;">付款报销跟踪</div>
<div class="t" style="left:1614px;top:1674.0px;font-size:28px;line-height:56px;color:#3e8ee8;font-weight:400;">V1.0</div>
<div class="abs" style="left:1614px;top:1721px;width:53px;height:3px;background:#3e8ee8"></div>
<div class="t" style="left:1775px;top:1674.0px;font-size:28px;line-height:56px;color:#606266;font-weight:400;">V1.0</div>
<div class="t" style="left:1936px;top:1674.0px;font-size:28px;line-height:56px;color:#606266;font-weight:400;">已发布</div>
<div class="t" style="left:2135px;top:1656.5px;font-size:28px;line-height:45.5px;color:#606266;font-weight:400;">龙石数据–徐</div>
<div class="t" style="left:2135px;top:1702.0px;font-size:28px;line-height:45.5px;color:#606266;font-weight:400;">新洁</div>
<div class="t" style="left:2335px;top:1656.5px;font-size:28px;line-height:45.5px;color:#606266;font-weight:400;">2024–12–19</div>
<div class="t" style="left:2335px;top:1702.0px;font-size:28px;line-height:45.5px;color:#606266;font-weight:400;">16:37:09</div>
<div class="t" style="left:2577px;top:1645.0px;font-size:24px;line-height:48px;color:#3a8ee6;font-weight:400;-webkit-text-stroke:0.35px #3a8ee6;">查看</div>
<div class="t" style="left:2659px;top:1645.0px;font-size:24px;line-height:48px;color:#3a8ee6;font-weight:400;-webkit-text-stroke:0.35px #3a8ee6;">编辑</div>
<div class="t" style="left:2741px;top:1645.0px;font-size:24px;line-height:48px;color:#c0c4cc;font-weight:400;">删除</div>
<div class="t" style="left:2578px;top:1709.0px;font-size:24px;line-height:48px;color:#3a8ee6;font-weight:400;-webkit-text-stroke:0.35px #3a8ee6;">申请下架</div>
</body></html>
